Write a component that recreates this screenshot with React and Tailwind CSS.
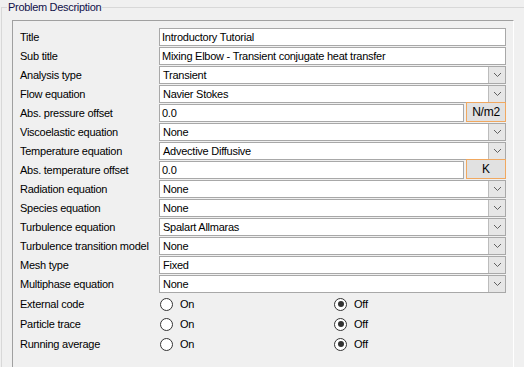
const font = { fontFamily: '"Liberation Sans", Arial, sans-serif' };

const rows = [
  { label: "Title", kind: "text", value: "Introductory Tutorial" },
  { label: "Sub title", kind: "text", value: "Mixing Elbow - Transient conjugate heat transfer" },
  { label: "Analysis type", kind: "combo", value: "Transient" },
  { label: "Flow equation", kind: "combo", value: "Navier Stokes" },
  { label: "Abs. pressure offset", kind: "unit", value: "0.0", unit: "N/m2" },
  { label: "Viscoelastic equation", kind: "combo", value: "None" },
  { label: "Temperature equation", kind: "combo", value: "Advective Diffusive" },
  { label: "Abs. temperature offset", kind: "unit", value: "0.0", unit: "K" },
  { label: "Radiation equation", kind: "combo", value: "None" },
  { label: "Species equation", kind: "combo", value: "None" },
  { label: "Turbulence equation", kind: "combo", value: "Spalart Allmaras" },
  { label: "Turbulence transition model", kind: "combo", value: "None" },
  { label: "Mesh type", kind: "combo", value: "Fixed" },
  { label: "Multiphase equation", kind: "combo", value: "None" },
];

const radios = ["External code", "Particle trace", "Running average"];

function Chevron() {
  return (
    <svg width="9" height="6" viewBox="0 0 9 6">
      <path d="M1 1 L4.5 4.5 L8 1" fill="none" stroke="#606060" strokeWidth="1" />
    </svg>
  );
}

function Field({ row }) {
  if (row.kind === "text") {
    return (
      <div className="h-[18px] w-[347px] border border-[#a8a8a8] bg-white flex items-center pl-[2px]">
        {row.value}
      </div>
    );
  }
  if (row.kind === "combo") {
    return (
      <div className="h-[18px] w-[347px] border border-[#a8a8a8] bg-white flex items-center">
        <span className="flex-1 pl-[3px]">{row.value}</span>
        <span className="h-full w-[17px] bg-[#e6e6e6] border-l border-[#bcbcbc] flex items-center justify-center">
          <Chevron />
        </span>
      </div>
    );
  }
  return (
    <div className="h-[18px] w-[347px] flex items-center gap-[2px]">
      <div className="h-[18px] flex-1 border border-[#a8a8a8] bg-white flex items-center pl-[2px]">
        {row.value}
      </div>
      <button className="h-[20px] -mt-[2px] w-[40px] border border-[#f0a860] bg-[#e1e1e1] flex items-center justify-center text-[12px] text-black">
        {row.unit}
      </button>
    </div>
  );
}

function Radio({ checked, label }) {
  return (
    <div className="flex items-center gap-[7px]">
      <span className="w-[13px] h-[13px] rounded-full border border-[#333333] bg-white flex items-center justify-center">
        {checked && <span className="w-[6px] h-[6px] rounded-full bg-[#333333]" />}
      </span>
      <span>{label}</span>
    </div>
  );
}

export default function App() {
  return (
    <div
      className="w-[524px] h-[367px] bg-[#f0f0f0] overflow-hidden text-[11px] tracking-[-0.25px] text-black"
      style={font}
    >
      <fieldset className="w-[540px] h-[400px] border border-[#d8d8d8] ml-[1px] pl-[5px]">
        <legend className="px-[1px] leading-[14px] text-[11px] text-[#10104a] tracking-[-0.3px]">
          Problem Description
        </legend>
        <div className="mt-[6px] ml-[5px] w-[502px] h-[360px] border-l border-t border-r border-l-[#a0a0a0] border-t-[#a0a0a0] border-r-white pl-[7px] pt-[7px]">
          {rows.map((row) => (
            <div key={row.label} className="h-[19px] flex">
              <div className="w-[139px] h-[18px] flex items-center">{row.label}</div>
              <Field row={row} />
            </div>
          ))}
          {radios.map((label) => (
            <div key={label} className="h-[20px] flex items-center">
              <div className="w-[140px]">{label}</div>
              <div className="w-[174px]">
                <Radio label="On" />
              </div>
              <Radio checked label="Off" />
            </div>
          ))}
        </div>
      </fieldset>
    </div>
  );
}
